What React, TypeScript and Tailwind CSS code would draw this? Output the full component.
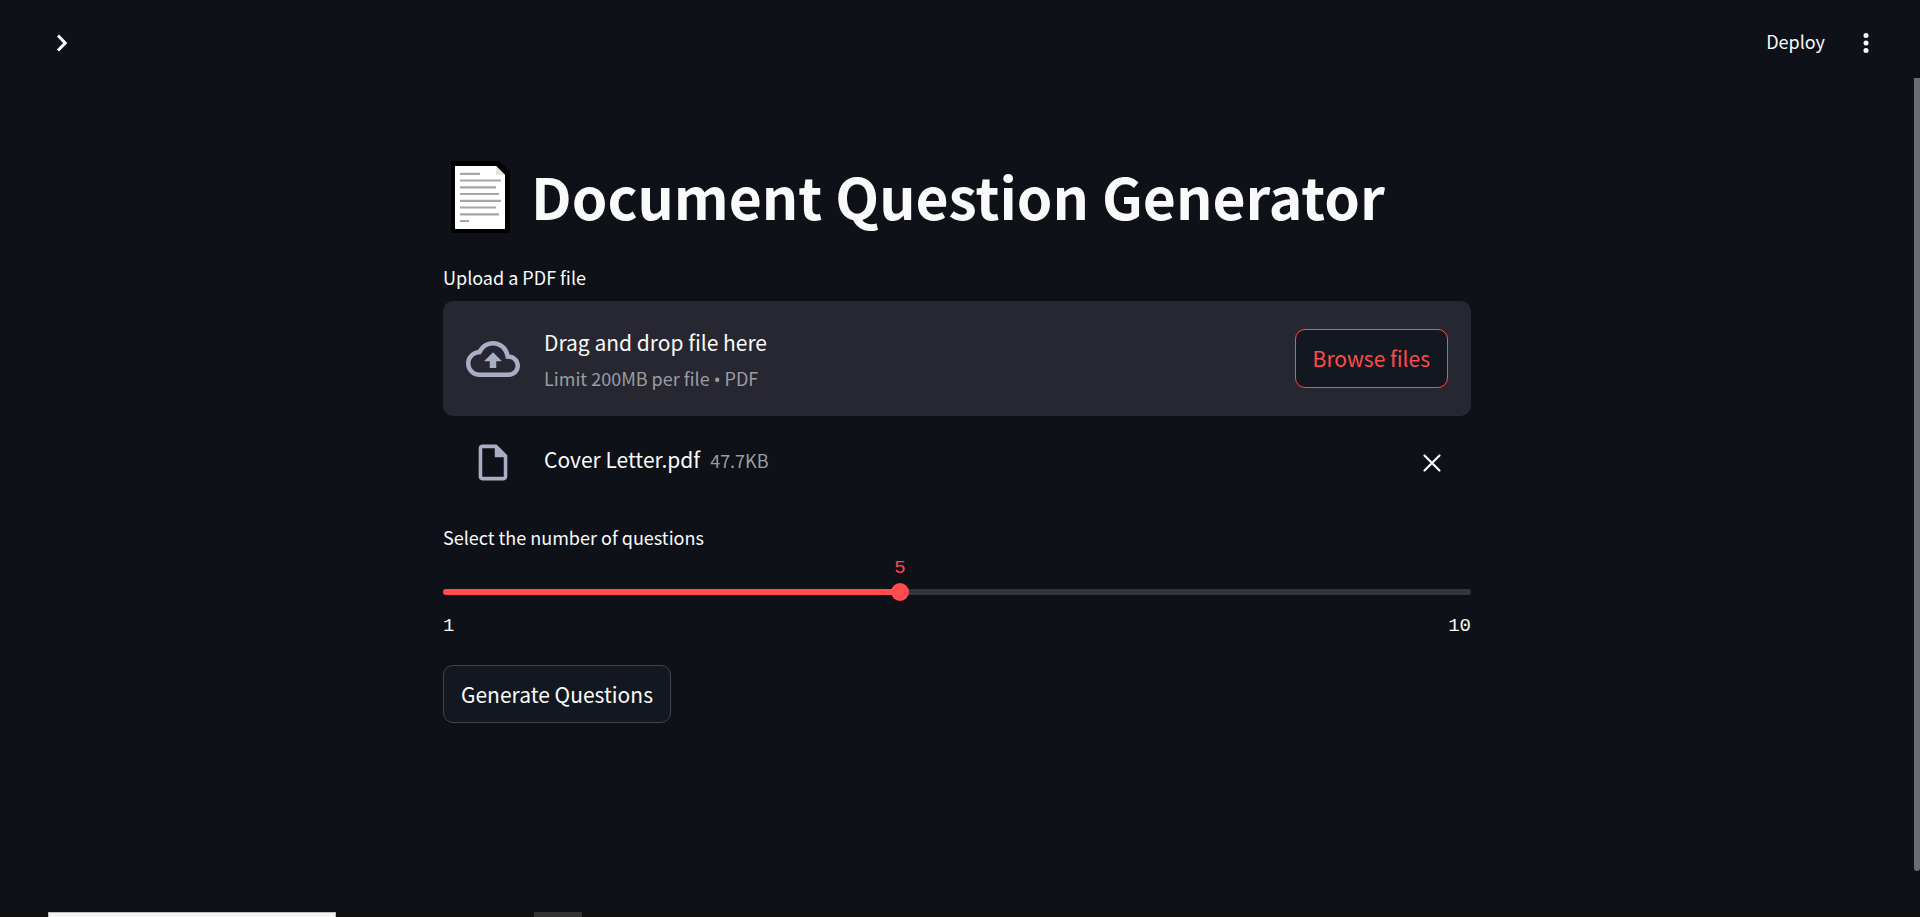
import { useState } from "react";

function PageIcon() {
  return (
    <svg className="h-18 w-15 shrink-0" viewBox="0 0 60 72" role="img" aria-label="Page">
      <path d="M0 0H48L59 11V72H0Z" fill="#000" />
      <path d="M4 5H45L54 14V68H4Z" fill="#fff" />
      <path d="M45 5L54 14H45Z" fill="#e3e3e3" />
      <path
        d="M9 12.8H29M9 19.5H50M9 26.3H45M9 33H48M9 39.8H50M9 46.5H45M9 53.3H48M9 60H18"
        stroke="#a6a6a6"
        strokeWidth="2.2"
        fill="none"
      />
    </svg>
  );
}

function CloudUploadIcon() {
  return (
    <svg className="size-[54px] shrink-0" viewBox="0 0 24 24" fill="currentColor" aria-hidden="true">
      <path d="M19.35 10.04A7.49 7.49 0 0 0 12 4C9.11 4 6.6 5.64 5.35 8.04A5.994 5.994 0 0 0 0 14c0 3.31 2.69 6 6 6h13c2.76 0 5-2.24 5-5 0-2.64-2.05-4.78-4.65-4.96zM19 18H6c-2.21 0-4-1.79-4-4 0-2.05 1.53-3.76 3.56-3.97l1.07-.11.5-.95A5.469 5.469 0 0 1 12 6c2.62 0 4.88 1.86 5.39 4.43l.3 1.5 1.53.11A2.98 2.98 0 0 1 22 15c0 1.65-1.35 3-3 3zM8 13h2.55v3h2.9v-3H16l-4-4-4 4z" />
    </svg>
  );
}

function FileIcon() {
  return (
    <svg className="h-[43px] w-[54px] shrink-0" viewBox="0 0 24 24" fill="currentColor" aria-hidden="true">
      <path d="M14 2H6c-1.1 0-1.99.9-1.99 2L4 20c0 1.1.89 2 1.99 2H18c1.1 0 2-.9 2-2V8l-6-6zM6 20V4h7v5h5v11H6z" />
    </svg>
  );
}

const MIN = 1;
const MAX = 10;

export default function App() {
  const [count, setCount] = useState(5);
  const percent = ((count - MIN) / (MAX - MIN)) * 100;

  return (
    <div className="flex min-h-screen flex-col bg-[#0e1117] font-['Noto_Sans_CJK_SC',sans-serif] text-[#fafafa]">
      <header className="flex h-[78px] items-center justify-between pr-10 pl-12">
        <button type="button" aria-label="Open sidebar" className="mt-2 flex size-7 items-center justify-center">
          <svg className="h-5 w-3" viewBox="0 0 12 20" fill="none" stroke="#fff" strokeWidth="3" aria-hidden="true">
            <path d="M2 2.5L9.2 10L2 17.5" />
          </svg>
        </button>
        <div className="mt-2 flex items-center gap-[27px]">
          <button type="button" className="pb-1 text-lg">
            Deploy
          </button>
          <button type="button" aria-label="Main menu" className="flex size-7 items-center justify-center">
            <svg className="h-5 w-2" viewBox="0 0 8 20" fill="#fff" aria-hidden="true">
              <circle cx="4" cy="2.5" r="2.5" />
              <circle cx="4" cy="10" r="2.5" />
              <circle cx="4" cy="17.5" r="2.5" />
            </svg>
          </button>
        </div>
      </header>

      <div className="flex flex-1">
        <main className="flex-1 px-5 pt-[79px]">
          <div className="mx-auto max-w-[1028px]">
            <h1 className="flex h-20 items-center gap-5 pl-2 text-[57px] leading-none font-bold">
              <PageIcon />
              <span className="pb-1 whitespace-nowrap">Document Question Generator</span>
            </h1>

            <section className="pt-7">
              <label htmlFor="pdf-browse" className="block text-lg leading-6">
                Upload a PDF file
              </label>
              <div className="mt-3 flex h-[115px] items-center gap-6 rounded-[10px] bg-[#262730] px-[23px]">
                <span className="text-[#a9aec4]">
                  <CloudUploadIcon />
                </span>
                <div className="flex-1 pt-[2px]">
                  <p className="text-[21px] leading-8">Drag and drop file here</p>
                  <p className="pt-1 text-lg leading-8 text-[#9c9da1]">
                    Limit 200MB per file <span className="font-['Noto_Sans',sans-serif] text-lg">•</span> PDF
                  </p>
                </div>
                <button
                  id="pdf-browse"
                  type="button"
                  className="h-[59px] rounded-[10px] border border-[#ff4b4b] bg-[#131720] px-[17px] text-[21px] text-[#ff4b4b]"
                >
                  Browse files
                </button>
              </div>
              <div className="flex h-[93px] items-center gap-6 px-[23px]">
                <span className="text-[#a9aec4]">
                  <FileIcon />
                </span>
                <p className="flex flex-1 items-baseline gap-[10px] pb-[6px]">
                  <span className="text-[21px]">Cover Letter.pdf</span>
                  <span className="text-lg text-[#9c9da1]">47.7KB</span>
                </p>
                <button type="button" aria-label="Remove file" className="flex size-8 items-center justify-center">
                  <svg className="size-5" viewBox="0 0 20 20" fill="none" stroke="#fafafa" strokeWidth="2.2" strokeLinecap="round" aria-hidden="true">
                    <path d="M2.5 2.5L17.5 17.5M17.5 2.5L2.5 17.5" />
                  </svg>
                </button>
              </div>
            </section>

            <section className="pt-4">
              <label htmlFor="question-count" className="block text-lg leading-6">
                Select the number of questions
              </label>
              <div className="pt-[7px] font-['Liberation_Mono',monospace] text-[19px] leading-6 text-[#ff4b4b]">
                <output htmlFor="question-count" className="block w-0" style={{ marginLeft: `${percent}%` }}>
                  <span className="flex w-10 -translate-x-1/2 justify-center">{count}</span>
                </output>
              </div>
              <div className="grid h-6 items-center">
                <div className="col-start-1 row-start-1 h-[6px] overflow-hidden rounded-full bg-[#34363f]">
                  <div className="h-full bg-[#ff4b4b]" style={{ width: `${percent}%` }} />
                </div>
                <input
                  id="question-count"
                  type="range"
                  min={MIN}
                  max={MAX}
                  value={count}
                  onChange={(event) => setCount(Number(event.target.value))}
                  className="col-start-1 row-start-1 -mx-[9px] h-[18px] appearance-none bg-transparent [&::-webkit-slider-thumb]:size-[18px] [&::-webkit-slider-thumb]:appearance-none [&::-webkit-slider-thumb]:rounded-full [&::-webkit-slider-thumb]:bg-[#ff4b4b]"
                />
              </div>
              <div className="flex justify-between pt-[6px] font-['Liberation_Mono',monospace] text-[19px] leading-8">
                <span>{MIN}</span>
                <span>{MAX}</span>
              </div>
            </section>

            <button
              type="button"
              className="mt-[23px] h-[58px] rounded-[10px] border border-[#41444c] bg-[#131720] px-[17px] text-[21px] leading-[54px]"
            >
              Generate Questions
            </button>
          </div>
        </main>
        <div className="mb-[41px] w-[6px] rounded-b-[3px] bg-[#6b6c70]" />
      </div>

      <footer className="flex h-[5px] bg-[#111111] pl-12">
        <div className="w-[288px] border border-b-0 border-[#bdbdbd] bg-[#f3f3f3]" />
        <div className="ml-[198px] w-12 bg-[#333333]" />
      </footer>
    </div>
  );
}
